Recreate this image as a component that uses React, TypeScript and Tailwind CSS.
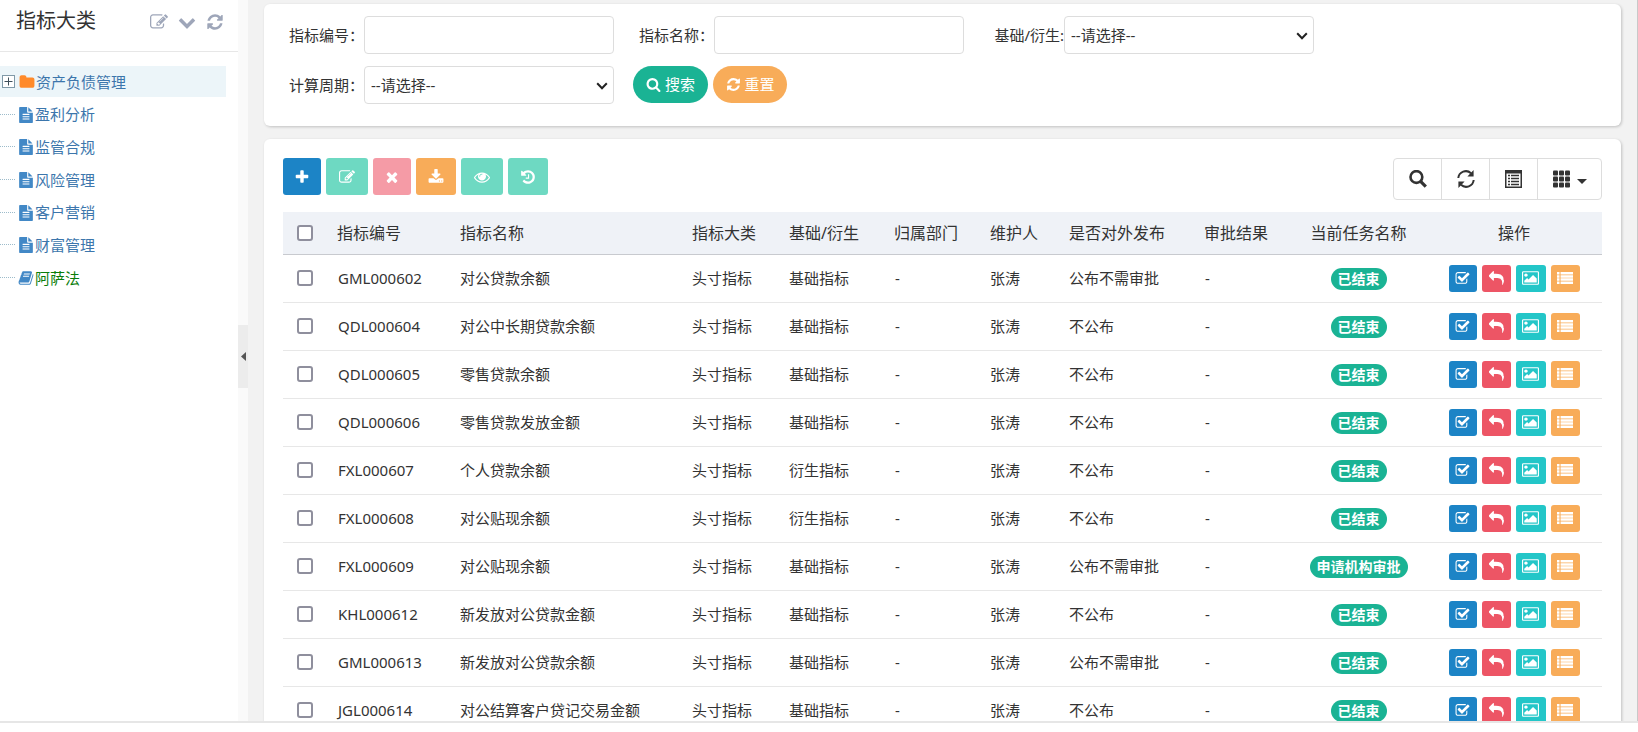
import type { ReactNode } from 'react';

const ICONS = {
  edit: 'M888 1184l116-116-152-152-116 116v56h96v96h56zm440-720q-16-16-33 1l-350 350q-17 17-1 33t33-1l350-350q17-17 1-33zm80 594v190q0 119-84.5 203.5t-203.5 84.5h-832q-119 0-203.5-84.5t-84.5-203.5v-832q0-119 84.5-203.5t203.5-84.5h832q63 0 117 25 15 7 18 23 3 17-9 29l-49 49q-14 14-32 8-23-6-45-6h-832q-66 0-113 47t-47 113v832q0 66 47 113t113 47h832q66 0 113-47t47-113v-126q0-13 9-22l64-64q15-15 35-7t20 29zm-96-738l288 288-672 672h-288v-288zm444 132l-92 92-288-288 92-92q28-28 68-28t68 28l152 152q28 28 28 68t-28 68z',
  chevron: 'M1683 808l-742 741q-19 19-45 19t-45-19l-742-741q-19-19-19-45.5t19-45.5l166-165q19-19 45-19t45 19l531 531 531-531q19-19 45-19t45 19l166 165q19 19 19 45.5t-19 45.5z',
  refresh: 'M1639 1056q0 5-1 7-64 268-268 434.5t-478 166.5q-146 0-282.5-55t-243.5-157l-129 129q-19 19-45 19t-45-19-19-45v-448q0-26 19-45t45-19h448q26 0 45 19t19 45-19 45l-137 137q71 66 161 102t187 36q134 0 250-65t186-179q11-17 53-117 8-23 30-23h192q13 0 22.5 9.5t9.5 22.5zm25-800v448q0 26-19 45t-45 19h-448q-26 0-45-19t-19-45 19-45l138-138q-148-137-349-137-134 0-250 65t-186 179q-11 17-53 117-8 23-30 23h-199q-13 0-22.5-9.5t-9.5-22.5v-7q65-268 270-434.5t480-166.5q146 0 284 55.5t245 156.5l130-129q19-19 45-19t45 19 19 45z',
  search: 'M1216 832q0-185-131.5-316.5t-316.5-131.5-316.5 131.5-131.5 316.5 131.5 316.5 316.5 131.5 316.5-131.5 131.5-316.5zm512 832q0 52-38 90t-90 38q-54 0-90-38l-343-342q-179 124-399 124-143 0-273.5-55.5t-225-150-150-225-55.5-273.5 55.5-273.5 150-225 225-150 273.5-55.5 273.5 55.5 225 150 150 225 55.5 273.5q0 220-124 399l343 343q37 37 37 90z',
  plus: 'M1600 736v192q0 40-28 68t-68 28h-416v416q0 40-28 68t-68 28h-192q-40 0-68-28t-28-68v-416h-416q-40 0-68-28t-28-68v-192q0-40 28-68t68-28h416v-416q0-40 28-68t68-28h192q40 0 68 28t28 68v416h416q40 0 68 28t28 68z',
  remove: 'M1490 1322q0 40-28 68l-136 136q-28 28-68 28t-68-28l-294-294-294 294q-28 28-68 28t-68-28l-136-136q-28-28-28-68t28-68l294-294-294-294q-28-28-28-68t28-68l136-136q28-28 68-28t68 28l294 294 294-294q28-28 68-28t68 28l136 136q28 28 28 68t-28 68l-294 294 294 294q28 28 28 68z',
  download: 'M1344 1344q0-26-19-45t-45-19-45 19-19 45 19 45 45 19 45-19 19-45zm256 0q0-26-19-45t-45-19-45 19-19 45 19 45 45 19 45-19 19-45zm128-224v320q0 40-28 68t-68 28h-1472q-40 0-68-28t-28-68v-320q0-40 28-68t68-28h465l135 136q58 56 136 56t136-56l136-136h464q40 0 68 28t28 68zm-325-569q17 41-14 70l-448 448q-18 19-45 19t-45-19l-448-448q-31-29-14-70 17-39 59-39h256v-448q0-26 19-45t45-19h256q26 0 45 19t19 45v448h256q42 0 59 39z',
  eye: 'M1664 960q-152-236-381-353 61 104 61 225 0 185-131.5 316.5t-316.5 131.5-316.5-131.5-131.5-316.5q0-121 61-225-229 117-381 353 133 205 333.5 326.5t434.5 121.5 434.5-121.5 333.5-326.5zm-720-384q0-20-14-34t-34-14q-125 0-214.5 89.5t-89.5 214.5q0 20 14 34t34 14 34-14 14-34q0-86 61-147t147-61q20 0 34-14t14-34zm848 384q0 34-20 69-140 230-376.5 368.5t-499.5 138.5-499.5-139-376.5-368q-20-35-20-69t20-69q140-229 376.5-368t499.5-139 499.5 139 376.5 368q20 35 20 69z',
  history: 'M1664 896q0 156-61 298t-164 245-245 164-298 61q-172 0-327-72.5t-264-204.5q-7-10-6.5-22.5t8.5-20.5l137-138q10-9 25-9 16 2 23 12 73 95 179 147t225 52q104 0 198.5-40.5t163.5-109.5 109.5-163.5 40.5-198.5-40.5-198.5-109.5-163.5-163.5-109.5-198.5-40.5q-98 0-188 35.5t-160 101.5l137 138q31 30 14 69-17 40-59 40h-448q-26 0-45-19t-19-45v-448q0-42 40-59 39-17 69 14l130 129q107-101 244.5-156.5t284.5-55.5q156 0 298 61t245 164 164 245 61 298zm-640-288v448q0 14-9 23t-23 9h-320q-14 0-23-9t-9-23v-64q0-14 9-23t23-9h224v-352q0-14 9-23t23-9h64q14 0 23 9t9 23z',
  check: 'M1472 930v318q0 119-84.5 203.5t-203.5 84.5h-832q-119 0-203.5-84.5t-84.5-203.5v-832q0-119 84.5-203.5t203.5-84.5h832q63 0 117 25 15 7 18 23 3 17-9 29l-49 49q-10 10-23 10-3 0-9-2-23-6-45-6h-832q-66 0-113 47t-47 113v832q0 66 47 113t113 47h832q66 0 113-47t47-113v-254q0-13 9-22l64-64q10-10 23-10 6 0 12 3 20 8 20 29zm231-489l-814 814q-24 24-57 24t-57-24l-430-430q-24-24-24-57t24-57l110-110q24-24 57-24t57 24l263 263 647-647q24-24 57-24t57 24l110 110q24 24 24 57t-24 57z',
  reply: 'M1792 1120q0 166-127 451-3 7-10.5 24t-13.5 30-13 22q-12 17-28 17-15 0-23.5-10t-8.5-25q0-9 2.5-26.5t2.5-23.5q5-68 5-123 0-112-19.5-200.5t-54-153.5-89-112-117-80-144.5-47.5-163-23.5-182.5-8h-224v256q0 26-19 45t-45 19-45-19l-512-512q-19-19-19-45t19-45l512-512q19-19 45-19t45 19 19 45v256h224q713 0 875 403 53 134 53 333z',
  image: 'M576 576q0 80-56 136t-136 56-136-56-56-136 56-136 136-56 136 56 56 136zm1024 384v448h-1408v-192l320-320 160 160 512-512zm96-704h-1600q-13 0-22.5 9.5t-9.5 22.5v1216q0 13 9.5 22.5t22.5 9.5h1600q13 0 22.5-9.5t9.5-22.5v-1216q0-13-9.5-22.5t-22.5-9.5zm160 32v1216q0 66-47 113t-113 47h-1600q-66 0-113-47t-47-113v-1216q0-66 47-113t113-47h1600q66 0 113 47t47 113z',
  list: 'M0 224h280v280H0zM400 224h1392v280H400zM0 576h280v280H0zM400 576h1392v280H400zM0 928h280v280H0zM400 928h1392v280H400zM0 1280h280v280H0zM400 1280h1392v280H400z',
  file: 'M1596 476q14 14 28 36h-472v-472q22 14 36 28zm-476 164h544v1056q0 40-28 68t-68 28h-1344q-40 0-68-28t-28-68v-1600q0-40 28-68t68-28h800v544q0 40 28 68t68 28zm160 736v-64q0-14-9-23t-23-9h-704q-14 0-23 9t-9 23v64q0 14 9 23t23 9h704q14 0 23-9t9-23zm0-256v-64q0-14-9-23t-23-9h-704q-14 0-23 9t-9 23v64q0 14 9 23t23 9h704q14 0 23-9t9-23zm0-256v-64q0-14-9-23t-23-9h-704q-14 0-23 9t-9 23v64q0 14 9 23t23 9h704q14 0 23-9t9-23z',
  folder: 'M1728 608v704q0 92-66 158t-158 66h-1216q-92 0-158-66t-66-158v-960q0-92 66-158t158-66h320q92 0 158 66t66 158v32h672q92 0 158 66t66 158z',
  book: 'M1703 478q40 57 18 129l-275 906q-19 64-76.5 107.5t-122.5 43.5h-923q-77 0-148.5-53.5t-99.5-131.5q-24-67-2-127 0-4 3-27t4-37q1-8-3-21.5t-3-19.5q2-11 8-21t16.5-23.5 16.5-23.5q23-38 45-91.5t30-91.5q3-10 .5-30t-.5-28q3-11 17-28t17-23q21-36 42-92t25-90q1-9-2.5-32t.5-28q4-13 22-30.5t22-22.5q19-26 42.5-84.5t27.5-96.5q1-8-3-25.5t-2-26.5q2-8 9-18t18-23 17-21q8-12 16.5-30.5t15-35 16-36 19.5-32 26.5-23.5 36-11.5 47.5 5.5l-1 3q38-9 51-9h761q74 0 114 56t18 130l-274 906q-36 119-71.5 153.5t-128.5 34.5h-869q-27 0-38 15-11 16-1 43 24 70 144 70h923q29 0 56-15.5t35-41.5l300-987q7-22 5-57 38 15 59 43zm-1064 2q-4 13 2 22.5t20 9.5h608q13 0 25.5-9.5t16.5-22.5l21-64q4-13-2-22.5t-20-9.5h-608q-13 0-25.5 9.5t-16.5 22.5zm-83 256q-4 13 2 22.5t20 9.5h608q13 0 25.5-9.5t16.5-22.5l21-64q4-13-2-22.5t-20-9.5h-608q-13 0-25.5 9.5t-16.5 22.5z',
};

type IconName = keyof typeof ICONS;

function Icon({ name, className }: { name: IconName; className: string }) {
  return (
    <svg
      viewBox={name === 'image' ? '-64 0 1920 1792' : '0 0 1792 1792'}
      fill="currentColor"
      aria-hidden="true"
      className={`shrink-0 ${className}`}
    >
      <path d={ICONS[name]} />
    </svg>
  );
}

const TREE: { label: string; icon: IconName; iconColor: string; textColor: string; selected?: boolean }[] = [
  { label: '资产负债管理', icon: 'folder', iconColor: 'text-[#ff8a2a]', textColor: 'text-[#3c76ac]', selected: true },
  { label: '盈利分析', icon: 'file', iconColor: 'text-[#4288c6]', textColor: 'text-[#3c76ac]' },
  { label: '监管合规', icon: 'file', iconColor: 'text-[#4288c6]', textColor: 'text-[#3c76ac]' },
  { label: '风险管理', icon: 'file', iconColor: 'text-[#4288c6]', textColor: 'text-[#3c76ac]' },
  { label: '客户营销', icon: 'file', iconColor: 'text-[#4288c6]', textColor: 'text-[#3c76ac]' },
  { label: '财富管理', icon: 'file', iconColor: 'text-[#4288c6]', textColor: 'text-[#3c76ac]' },
  { label: '阿萨法', icon: 'book', iconColor: 'text-[#4288c6]', textColor: 'text-[#0a7d0a]' },
];

const ROWS = [
  ['GML000602', '对公贷款余额', '基础指标', '公布不需审批', '已结束'],
  ['QDL000604', '对公中长期贷款余额', '基础指标', '不公布', '已结束'],
  ['QDL000605', '零售贷款余额', '基础指标', '不公布', '已结束'],
  ['QDL000606', '零售贷款发放金额', '基础指标', '不公布', '已结束'],
  ['FXL000607', '个人贷款余额', '衍生指标', '不公布', '已结束'],
  ['FXL000608', '对公贴现余额', '衍生指标', '不公布', '已结束'],
  ['FXL000609', '对公贴现余额', '基础指标', '公布不需审批', '申请机构审批'],
  ['KHL000612', '新发放对公贷款金额', '基础指标', '不公布', '已结束'],
  ['GML000613', '新发放对公贷款余额', '基础指标', '公布不需审批', '已结束'],
  ['JGL000614', '对公结算客户贷记交易金额', '基础指标', '不公布', '已结束'],
];

const TOOLS: { label: string; icon: IconName; style: string }[] = [
  { label: '新增', icon: 'plus', style: 'w-[38px] bg-[#1c84c6]' },
  { label: '修改', icon: 'edit', style: 'w-[42px] bg-[#6ed9c2]' },
  { label: '删除', icon: 'remove', style: 'w-[38px] bg-[#f59ba6]' },
  { label: '导出', icon: 'download', style: 'w-10 bg-[#f8ac59]' },
  { label: '查看', icon: 'eye', style: 'w-[42px] bg-[#6ed9c2]' },
  { label: '历史', icon: 'history', style: 'w-10 bg-[#6ed9c2]' },
];

const ACTIONS: { label: string; icon: IconName; style: string; iconSize: string }[] = [
  { label: '审核', icon: 'check', style: 'w-7 bg-[#1c84c6]', iconSize: 'size-[15px]' },
  { label: '退回', icon: 'reply', style: 'w-[29px] bg-[#ed5565]', iconSize: 'size-[15px]' },
  { label: '流程图', icon: 'image', style: 'w-[30px] bg-[#23c6c8]', iconSize: 'h-4 w-[17px]' },
  { label: '明细', icon: 'list', style: 'w-[29px] bg-[#f8ac59]', iconSize: 'size-4' },
];

const FIELD = 'h-[38px] w-[250px] rounded border border-[#dddddd] bg-white px-[6px] text-[15px] text-[#333333] outline-none';

function Field({ id, label, children }: { id: string; label: string; children: ReactNode }) {
  return (
    <div className="flex items-center">
      <label htmlFor={id} className="min-w-[75px] whitespace-nowrap text-right">
        {label}
      </label>
      {children}
    </div>
  );
}

function SelectBox({ id }: { id: string }) {
  return (
    <span className="relative inline-flex">
      <select id={id} className={`${FIELD} appearance-none`}>
        <option>--请选择--</option>
      </select>
      <svg
        viewBox="0 0 12 8"
        fill="none"
        stroke="#222222"
        strokeWidth="2"
        aria-hidden="true"
        className="pointer-events-none absolute right-[6px] top-4 h-2 w-3"
      >
        <path d="M1.2 1.2 6 6.2l4.8-5" />
      </svg>
    </span>
  );
}

function Checkbox({ label }: { label: string }) {
  return (
    <input
      type="checkbox"
      aria-label={label}
      className="ml-[14px] block size-4 appearance-none rounded-[3px] border-2 border-[#8f8f9d] bg-white"
    />
  );
}

function Sidebar() {
  return (
    <aside className="w-[238px] shrink-0 bg-white">
      <header className="flex h-[52px] items-start justify-between border-b border-[#e7e7e7] pl-4 pr-[14px] pt-[7px]">
        <h1 className="text-[20px] leading-7 text-[#333333]">指标大类</h1>
        <div className="flex items-center gap-[10px] pt-[6px] text-[#9ea6b9]">
          <button type="button" aria-label="编辑">
            <Icon name="edit" className="block size-[18px]" />
          </button>
          <button type="button" aria-label="展开">
            <Icon name="chevron" className="block size-[18px]" />
          </button>
          <button type="button" aria-label="刷新">
            <Icon name="refresh" className="block size-[18px]" />
          </button>
        </div>
      </header>
      <ul className="mt-[14px] flex h-[227px] flex-col justify-between">
        {TREE.map((node) => (
          <li
            key={node.label}
            className={`mr-3 flex h-[31px] items-center ${node.selected ? 'bg-[#ecf5f9]' : ''}`}
          >
            {node.selected ? (
              <button type="button" aria-label="展开节点" className="ml-[2px] mr-1">
                <svg viewBox="0 0 13 13" fill="none" aria-hidden="true" className="block size-[13px]">
                  <rect x="0.5" y="0.5" width="12" height="12" fill="#fff" stroke="#8099a8" />
                  <path d="M2.5 6.5h8M6.5 2.5v8" stroke="#3f4f5a" />
                </svg>
              </button>
            ) : (
              <span className="mr-[3px] w-[15px] border-t border-dotted border-[#9dbccb]" />
            )}
            <a href="#" className={`flex items-center gap-px pt-px text-[15px] ${node.textColor}`}>
              <Icon name={node.icon} className={`size-4 ${node.iconColor}`} />
              {node.label}
            </a>
          </li>
        ))}
      </ul>
    </aside>
  );
}

function Filters() {
  return (
    <form className="rounded-md bg-white pb-[22px] pl-[25px] pt-3 text-[15px] text-[#333333] shadow-[1px_1px_3px_rgba(0,0,0,0.2)]">
      <div className="flex flex-wrap gap-x-[25px] gap-y-3">
        <Field id="code" label="指标编号：">
          <input id="code" type="text" className={FIELD} />
        </Field>
        <Field id="name" label="指标名称：">
          <input id="name" type="text" className={FIELD} />
        </Field>
        <Field id="kind" label="基础/衍生:">
          <SelectBox id="kind" />
        </Field>
      </div>
      <div className="mt-3 flex items-start gap-[19px]">
        <Field id="cycle" label="计算周期：">
          <SelectBox id="cycle" />
        </Field>
        <div className="flex gap-[5px] text-white">
          <button type="button" className="flex h-[37px] w-[75px] items-center justify-center gap-1 rounded-full bg-[#1ab394]">
            <Icon name="search" className="size-[15px]" />
            搜索
          </button>
          <button type="button" className="flex h-[37px] w-[74px] items-center justify-center gap-1 rounded-full bg-[#f8ac59]">
            <Icon name="refresh" className="size-[15px]" />
            重置
          </button>
        </div>
      </div>
    </form>
  );
}

function Toolbar() {
  return (
    <div className="flex items-start justify-between">
      <div className="flex gap-[5px] text-white">
        {TOOLS.map((tool) => (
          <button
            key={tool.label}
            type="button"
            aria-label={tool.label}
            className={`flex h-[37px] items-center justify-center rounded-[3px] ${tool.style}`}
          >
            <Icon name={tool.icon} className="size-4" />
          </button>
        ))}
      </div>
      <div className="flex h-[42px] divide-x divide-[#dddddd] rounded border border-[#dddddd] text-[#333333]">
        <button type="button" aria-label="搜索" className="flex w-12 items-center justify-center">
          <svg viewBox="0 0 18 18" fill="none" stroke="currentColor" aria-hidden="true" className="size-[18px]">
            <circle cx="7.4" cy="7" r="5.9" strokeWidth="2.6" />
            <path d="M11.6 11.4l5.2 5.2" strokeWidth="3.2" />
          </svg>
        </button>
        <button type="button" aria-label="刷新" className="flex w-12 items-center justify-center">
          <svg viewBox="0 0 18 18" fill="none" stroke="currentColor" aria-hidden="true" className="size-[18px]">
            <path d="M1.3 8A7.6 7.6 0 0 1 14 3.2M16.7 10A7.6 7.6 0 0 1 4 14.8" strokeWidth="2" />
            <path d="M16.6 0v6.4h-6.2zM1.4 18v-6.4h6.2z" fill="currentColor" stroke="none" />
          </svg>
        </button>
        <button type="button" aria-label="视图" className="flex w-12 items-center justify-center">
          <svg viewBox="0 0 17 18" fill="none" stroke="currentColor" aria-hidden="true" className="h-[18px] w-[17px]">
            <path d="M0 0h17v18H0zM1.5 3.5v13h14v-13z" fill="currentColor" fillRule="evenodd" stroke="none" />
            <path d="M3 5.5h2M3 8.5h2M3 11.5h2M3 14.5h2M6 5.5h8M6 8.5h8M6 11.5h8M6 14.5h8" strokeWidth="1.6" />
          </svg>
        </button>
        <button type="button" aria-label="列" className="flex w-[63px] items-center justify-center gap-[6px]">
          <svg viewBox="0 0 18 18" fill="currentColor" aria-hidden="true" className="size-[18px]">
            {[0.5, 6.5, 12.5].map((y) =>
              [0, 6, 12].map((x) => <rect key={`${x}-${y}`} x={x} y={y} width="5" height="5" rx="1" />),
            )}
          </svg>
          <svg viewBox="0 0 10 5" fill="currentColor" aria-hidden="true" className="mt-1 h-[5px] w-[10px]">
            <path d="M0 0h10L5 5z" />
          </svg>
        </button>
      </div>
    </div>
  );
}

function DataTable() {
  return (
    <table className="mt-3 w-full table-fixed text-left text-[15px] text-[#333333]">
      <colgroup>
        <col className="w-[46px]" />
        <col className="w-[123px]" />
        <col />
        <col className="w-[97px]" />
        <col className="w-[105px]" />
        <col className="w-24" />
        <col className="w-[79px]" />
        <col className="w-[135px]" />
        <col className="w-[95px]" />
        <col className="w-[135px]" />
        <col className="w-44" />
      </colgroup>
      <thead>
        <tr className="h-[42px] border-b border-[#c8cacf] bg-[#eff2f7] text-[16px]">
          <th scope="col">
            <Checkbox label="全选" />
          </th>
          {['指标编号', '指标名称', '指标大类', '基础/衍生', '归属部门', '维护人', '是否对外发布', '审批结果'].map((title) => (
            <th key={title} scope="col" className="whitespace-nowrap px-2 font-normal">
              {title}
            </th>
          ))}
          <th scope="col" className="text-center font-normal">当前任务名称</th>
          <th scope="col" className="text-center font-normal">操作</th>
        </tr>
      </thead>
      <tbody>
        {ROWS.map(([code, name, kind, publish, status]) => (
          <tr key={code} className="h-12 border-b border-[#e7e7e7]">
            <td>
              <Checkbox label={code} />
            </td>
            <td className="px-[9px]">{code}</td>
            <td className="whitespace-nowrap px-2">{name}</td>
            <td className="px-2">头寸指标</td>
            <td className="px-2">{kind}</td>
            <td className="px-[9px]">-</td>
            <td className="px-2">张涛</td>
            <td className="whitespace-nowrap px-2">{publish}</td>
            <td className="px-[9px]">-</td>
            <td className="text-center">
              <span className="inline-block h-[22px] rounded-full bg-[#1ab394] px-[7px] align-middle text-[14px] font-bold leading-[22px] text-white">
                {status}
              </span>
            </td>
            <td>
              <div className="flex justify-center gap-[5px] text-white">
                {ACTIONS.map((action) => (
                  <button
                    key={action.label}
                    type="button"
                    aria-label={action.label}
                    className={`flex h-[27px] items-center justify-center rounded-[3px] ${action.style}`}
                  >
                    <Icon name={action.icon} className={action.iconSize} />
                  </button>
                ))}
              </div>
            </td>
          </tr>
        ))}
      </tbody>
    </table>
  );
}

export default function App() {
  return (
    <div className="flex h-screen flex-col bg-white font-['Noto_Sans','Noto_Sans_CJK_SC',sans-serif]">
      <div className="flex min-h-0 flex-1 overflow-hidden">
        <Sidebar />
        <div className="flex w-[10px] shrink-0 items-center bg-[#fafafa] pb-2">
          <button type="button" aria-label="收起侧栏" className="flex h-[63px] w-full items-center justify-center bg-[#ececec]">
            <svg viewBox="0 0 5 9" aria-hidden="true" className="h-[9px] w-[5px] fill-[#555555]">
              <path d="M5 0v9L0 4.5z" />
            </svg>
          </button>
        </div>
        <main className="min-w-0 flex-1 overflow-hidden border-r border-[#c9c9c9] bg-[#f2f2f2] pl-4 pr-4 pt-1">
          <Filters />
          <section className="mt-[13px] rounded-md bg-white px-[19px] pb-5 pt-[19px] shadow-[1px_1px_3px_rgba(0,0,0,0.2)]">
            <Toolbar />
            <DataTable />
          </section>
        </main>
      </div>
      <footer className="h-[11px] shrink-0 border-t-2 border-[#e6e6e6] bg-white" />
    </div>
  );
}
